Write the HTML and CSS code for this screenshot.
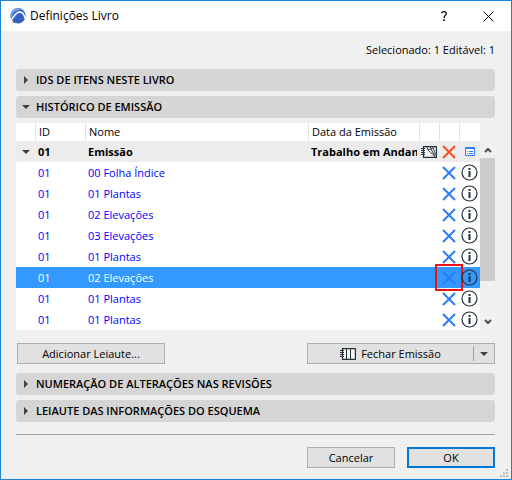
FILE: index.html
```html
<!DOCTYPE html>
<html lang="pt">
<head>
<meta charset="utf-8">
<title>Definições Livro</title>
<link rel="stylesheet" href="styles.css">
</head>
<body>
<svg class="defs" aria-hidden="true">
  <symbol id="cross" viewBox="0 0 14 14"><path d="M1 1L13 13M13 1L1 13" fill="none" stroke="currentColor" stroke-width="2"/></symbol>
  <symbol id="info" viewBox="0 0 17 17"><circle cx="8.5" cy="8.5" r="7.5" fill="none" stroke="currentColor" stroke-width="1.2"/><path d="M7.500 4h2v2h-2zM7.500 7h2v6h-2z" fill="currentColor"/></symbol>
  <symbol id="right" viewBox="0 0 4 8"><path d="M0 0L4 4L0 8z" fill="currentColor"/></symbol>
  <symbol id="down" viewBox="0 0 8 4"><path d="M0 0H8L4 4z" fill="currentColor"/></symbol>
</svg>
<main class="dialog">
  <header class="titlebar">
    <svg class="logo" viewBox="0 0 16 16" aria-hidden="true">
      <circle cx="8" cy="7.7" r="7.6" fill="#3f70cf"/>
      <path d="M.8 9C1.500 4 5 1 9.500 1.200" fill="none" stroke="#86a9e6" stroke-width="1.500"/>
      <path d="M.8 13.200C4 7 7 4 10 4C12.500 4.200 14.500 7 15.200 11" fill="none" stroke="#fff" stroke-width="1.300"/>
      <path d="M2.500 14.500C5.500 9 8 5.500 10 5.300C12.300 5.800 13.300 9.500 13.600 13L9 15.500z" fill="#3560c0"/>
    </svg>
    <h1 class="title">Definições Livro</h1>
    <button class="caption help" aria-label="Ajuda"><svg viewBox="0 0 6 10" width="6" height="10"><path d="M.6 2.400C.8 1 1.800.6 3 .6C4.500.6 5.300 1.400 5.300 2.600C5.300 4.400 3 4.400 3 7" fill="none" stroke="#000" stroke-width="1.300"/><path d="M2.200 8.300h1.600v1.600H2.200z"/></svg></button>
    <button class="caption" aria-label="Fechar"><svg viewBox="0 0 11 11" width="11" height="11"><path d="M.5.5l10 10M10.500.5l-10 10" stroke="#000" fill="none"/></svg></button>
  </header>
  <div class="content">
    <p class="status">Selecionado: 1 Editável: 1</p>
    <button class="section" aria-expanded="false"><span class="arrow"><svg width="4" height="8"><use href="#right"/></svg></span>IDS DE ITENS NESTE LIVRO</button>
    <button class="section" aria-expanded="true"><span class="arrow"><svg width="8" height="4"><use href="#down"/></svg></span>HISTÓRICO DE EMISSÃO</button>
    <div class="list">
      <table class="grid">
        <colgroup><col class="c-toggle"><col class="c-id"><col><col class="c-date"><col class="c-icon"><col class="c-icon"><col class="c-info"></colgroup>
        <thead>
          <tr><th></th><th>ID</th><th>Nome</th><th>Data da Emissão</th><th></th><th></th><th></th></tr>
        </thead>
        <tbody>
          <tr class="group"><td><button class="icon toggle" aria-label="Recolher"><svg width="8" height="4"><use href="#down"/></svg></button></td><td>01</td><td>Emissão</td><td><div class="date">Trabalho em Andamento</div></td>
            <td><span class="icon book"><svg width="16" height="12" viewBox="0 0 16 12"><path d="M2.500.6H15.400V11.400H2.500z" fill="#f4f4f4" stroke="#263238" stroke-width="1.200"/><path d="M0 2.500H4M0 4.500H4M0 6.500H4M0 8.500H4" stroke="#263238"/><path d="M6 1L7 4L14 10.500M9 1L14 10.500M12 1L14.500 9M7 4L12 2" fill="none" stroke="#263238" stroke-width=".9"/></svg></span></td>
            <td><button class="icon red" aria-label="Remover"><svg width="14" height="14"><use href="#cross"/></svg></button></td>
            <td><button class="icon detail" aria-label="Detalhes"><svg width="10" height="9" viewBox="0 0 10 9"><path d="M.5.5h9v8h-9z" fill="#fff" stroke="#2b7cff"/><path d="M0 1.500h10M2 4.500h1M4 4.500h4M2 6.500h1M4 6.500h4" stroke="#2b7cff" fill="none"/></svg></button></td></tr>
          <tr><td></td><td>01</td><td>00 Folha Índice</td><td></td><td></td><td><button class="icon" aria-label="Remover"><svg width="14" height="14"><use href="#cross"/></svg></button></td><td><button class="icon info" aria-label="Informações"><svg width="17" height="17"><use href="#info"/></svg></button></td></tr>
          <tr><td></td><td>01</td><td>01 Plantas</td><td></td><td></td><td><button class="icon" aria-label="Remover"><svg width="14" height="14"><use href="#cross"/></svg></button></td><td><button class="icon info" aria-label="Informações"><svg width="17" height="17"><use href="#info"/></svg></button></td></tr>
          <tr><td></td><td>01</td><td>02 Elevações</td><td></td><td></td><td><button class="icon" aria-label="Remover"><svg width="14" height="14"><use href="#cross"/></svg></button></td><td><button class="icon info" aria-label="Informações"><svg width="17" height="17"><use href="#info"/></svg></button></td></tr>
          <tr><td></td><td>01</td><td>03 Elevações</td><td></td><td></td><td><button class="icon" aria-label="Remover"><svg width="14" height="14"><use href="#cross"/></svg></button></td><td><button class="icon info" aria-label="Informações"><svg width="17" height="17"><use href="#info"/></svg></button></td></tr>
          <tr><td></td><td>01</td><td>01 Plantas</td><td></td><td></td><td><button class="icon" aria-label="Remover"><svg width="14" height="14"><use href="#cross"/></svg></button></td><td><button class="icon info" aria-label="Informações"><svg width="17" height="17"><use href="#info"/></svg></button></td></tr>
          <tr class="selected"><td></td><td>01</td><td>02 Elevações</td><td></td><td></td><td><button class="icon marked" aria-label="Remover"><svg width="14" height="14"><use href="#cross"/></svg></button></td><td><button class="icon info" aria-label="Informações"><svg width="17" height="17"><use href="#info"/></svg></button></td></tr>
          <tr><td></td><td>01</td><td>01 Plantas</td><td></td><td></td><td><button class="icon" aria-label="Remover"><svg width="14" height="14"><use href="#cross"/></svg></button></td><td><button class="icon info" aria-label="Informações"><svg width="17" height="17"><use href="#info"/></svg></button></td></tr>
          <tr><td></td><td>01</td><td>01 Plantas</td><td></td><td></td><td><button class="icon" aria-label="Remover"><svg width="14" height="14"><use href="#cross"/></svg></button></td><td><button class="icon info" aria-label="Informações"><svg width="17" height="17"><use href="#info"/></svg></button></td></tr>
        </tbody>
      </table>
      <div class="scrollbar">
        <button class="step" aria-label="Subir"><svg width="8" height="6" viewBox="0 0 8 6"><path d="M1 5L4 2L7 5" fill="none" stroke="#505050" stroke-width="2"/></svg></button>
        <div class="thumb"></div>
        <button class="step last" aria-label="Descer"><svg width="8" height="6" viewBox="0 0 8 6"><path d="M1 1L4 4L7 1" fill="none" stroke="#505050" stroke-width="2"/></svg></button>
      </div>
    </div>
    <div class="actions">
      <button class="btn add">Adicionar Leiaute...</button>
      <div class="split">
        <button class="split-main"><svg width="16" height="12" viewBox="0 0 16 12"><path d="M2.500.6H15.400V11.400H2.500z" fill="#f4f4f4" stroke="#263238" stroke-width="1.200"/><path d="M0 2.500H4M0 4.500H4M0 6.500H4M0 8.500H4M6.500 1V11M10.500 1V11" stroke="#263238"/></svg>Fechar Emissão</button>
        <button class="split-menu" aria-label="Mais opções"><svg width="8" height="4"><use href="#down"/></svg></button>
      </div>
    </div>
    <button class="section" aria-expanded="false"><span class="arrow"><svg width="4" height="8"><use href="#right"/></svg></span>NUMERAÇÃO DE ALTERAÇÕES NAS REVISÕES</button>
    <button class="section" aria-expanded="false"><span class="arrow"><svg width="4" height="8"><use href="#right"/></svg></span>LEIAUTE DAS INFORMAÇÕES DO ESQUEMA</button>
    <footer class="footer">
      <button class="btn">Cancelar</button>
      <button class="btn primary">OK</button>
    </footer>
  </div>
  <svg class="grip" width="8" height="8" viewBox="0 0 8 8" aria-hidden="true"><path d="M6 0h2v2H6zM3 3h2v2H3zM6 3h2v2H6zM0 6h2v2H0zM3 6h2v2H3zM6 6h2v2H6z" fill="#bfbfbf"/></svg>
</main>
</body>
</html>
```
FILE: styles.css
```css
* { box-sizing: border-box; }
body { margin: 0; }
body, button {
  font-family: "Open Sans", "Noto Sans", sans-serif;
  font-size: 11px;
  line-height: 16px;
  color: #000;
}
button { margin: 0; padding: 0; border: 0; background: none; }
svg { display: block; flex: none; }
.defs { position: absolute; width: 0; height: 0; }

.dialog {
  position: relative;
  min-height: 100vh;
  border: 1px solid #1883d7;
  background: #f0f0f0;
}
.titlebar {
  display: flex;
  align-items: center;
  height: 30px;
  padding-left: 9px;
  background: #fff;
}
.logo { width: 16px; height: 16px; }
.title { flex: 1; margin: 0 0 0 4px; font-size: 12px; font-weight: 400; }
.caption { display: flex; align-items: center; justify-content: center; width: 45px; height: 30px; }

.content { display: flex; flex-direction: column; padding: 11px 16px 11px 15px; }
.status { margin: 0 0 11px; text-align: right; }

.section {
  display: flex;
  align-items: center;
  height: 22px;
  margin-bottom: 5px;
  border-radius: 3px;
  background: #d5d5d5;
  font-weight: 600;
}
.arrow { display: flex; justify-content: center; width: 20px; color: #404040; }

.list { display: flex; }
.grid { flex: 1; width: 100%; table-layout: fixed; border-collapse: separate; border-spacing: 0; background: #fff; }
.c-toggle { width: 19px; }
.c-id { width: 50px; }
.c-date { width: 111px; }
.c-icon { width: 20px; }
.c-info { width: 21px; }
.grid th { height: 18px; padding: 0 3px; border-left: 1px solid #e0e0e0; font-weight: 400; text-align: left; }
.grid th:first-child { border-left: 0; }
.grid td { height: 21px; padding: 0 0 0 3px; color: #00f; white-space: nowrap; }
.grid td:first-child, .grid td:nth-child(n+5) { padding: 0; }
.date { margin-right: 2px; overflow: hidden; }
.group td { background: #ececec; font-weight: 700; }
.grid .group td { color: #000; }
.grid .selected td { background: #3399ff; color: #fff; }
.icon { position: relative; display: flex; align-items: center; justify-content: center; width: 100%; height: 21px; color: #2b7cff; }
.icon.info { color: #263238; }
.icon.red { color: #ff4a22; }
.icon.toggle { color: #404040; }
.marked::after {
  content: "";
  position: absolute;
  inset: -3px -4px;
  border: 2px solid #f01010;
}

.scrollbar { display: flex; flex-direction: column; width: 15px; margin-top: 18px; }
.step { display: flex; align-items: center; justify-content: center; height: 17px; }
.thumb { height: 123px; background: #cdcdcd; }
.last { margin-top: auto; }

.actions { display: flex; justify-content: space-between; margin: 13px 0 9px; padding-left: 1px; }
.btn { width: 88px; height: 21px; border: 1px solid #adadad; background: #e1e1e1; }
.btn.add { width: 148px; }
.btn.primary { border: 2px solid #0078d7; }
.split { display: flex; align-items: center; width: 188px; height: 21px; border: 1px solid #adadad; background: #e1e1e1; }
.split-main { display: flex; flex: 1; align-items: center; justify-content: center; gap: 5px; }
.split-menu { display: flex; align-items: center; justify-content: center; width: 21px; height: 15px; border-left: 1px solid #a0a0a0; color: #404040; }

.footer { display: flex; justify-content: flex-end; gap: 12px; margin-top: 7px; padding-top: 12px; border-top: 1px solid #a0a0a0; }
.grip { position: absolute; right: 3px; bottom: 2px; }
```
